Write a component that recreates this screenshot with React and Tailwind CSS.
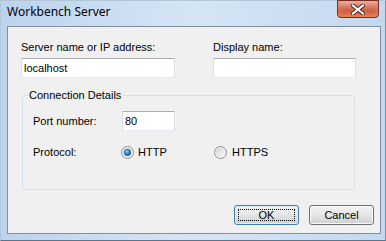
import React from "react";

const Radio = ({ checked }) => (
  <svg width="13" height="13" viewBox="0 0 13 13" className="shrink-0">
    <defs>
      <linearGradient id={checked ? "rg1" : "rg0"} x1="0" y1="0" x2="1" y2="1">
        <stop offset="0" stopColor="#d4d4d4" />
        <stop offset="1" stopColor="#f8f8f8" />
      </linearGradient>
      <radialGradient id="dot" cx="0.4" cy="0.35" r="0.7">
        <stop offset="0" stopColor="#8fd6ff" />
        <stop offset="0.5" stopColor="#2f87cf" />
        <stop offset="1" stopColor="#124a84" />
      </radialGradient>
    </defs>
    <circle cx="6.5" cy="6.5" r="6" fill="#f4f4f4" stroke="#8d8d8d" />
    <circle cx="6.5" cy="6.5" r="4.5" fill={`url(#${checked ? "rg1" : "rg0"})`} />
    {checked && <circle cx="6.5" cy="6.5" r="3.3" fill="url(#dot)" stroke="#1d5a8f" strokeWidth="0.6" />}
  </svg>
);

const TextBox = ({ value, className }) => (
  <div
    className={
      "h-[20px] bg-white border border-t-[#abadb3] border-x-[#dbdfe6] border-b-[#e3e9ef] pl-[2px] flex items-center " +
      (className || "")
    }
  >
    {value}
  </div>
);

const Button = ({ children, isDefault }) => (
  <button
    className={
      "relative w-[65px] h-[20px] rounded-[3px] border flex items-center justify-center bg-gradient-to-b from-[#f2f2f2] via-[#e6e6e6] to-[#cfcfcf] " +
      (isDefault ? "border-[#3c7fb1] shadow-[inset_0_0_0_1px_#dbeefb]" : "border-[#707070] shadow-[inset_0_0_0_1px_#fbfbfb]")
    }
  >
    {isDefault && <span className="absolute inset-[3px] border border-dotted border-black" />}
    <span className="relative">{children}</span>
  </button>
);

export default function App() {
  return (
    <div
      className="w-[386px] h-[241px] flex flex-col pl-[6px] pr-[4px] pb-[6px] bg-gradient-to-r from-[#bcd3ee] via-[#d6e5f5] to-[#c3d8ef] border border-[#b4c6da] border-b-[#5f7389] border-r-[#7d90a6] text-[11px] leading-[13px] text-black"
      style={{ fontFamily: '"Liberation Sans", Arial, sans-serif' }}
    >
      <div className="h-[25px] flex items-start shrink-0">
        <div className="mt-[3px] text-[12px] leading-[16px] text-black" style={{ fontFamily: '"Noto Sans", "Open Sans", sans-serif' }}>
          Workbench Server
        </div>
        <div className="ml-auto mr-[2px] mt-[-1px] w-[42px] h-[18px] rounded-b-[4px] border border-[#7a2b1f] bg-gradient-to-b from-[#eab0a2] via-[#d1684f] to-[#c1432b] flex items-center justify-center shadow-[inset_0_-3px_4px_#ea8d5e]">
          <svg width="14" height="11" viewBox="0 0 14 11">
            <path d="M2 1.5 L12 9.5 M12 1.5 L2 9.5" stroke="#4a1a12" strokeWidth="4" strokeLinecap="square" />
            <path d="M2 1.5 L12 9.5 M12 1.5 L2 9.5" stroke="#ffffff" strokeWidth="2.2" strokeLinecap="square" />
          </svg>
        </div>
      </div>

      <div className="flex-1 bg-[#f0f0f0] border border-[#7f8d9c] flex flex-col pl-[13px] pr-[6px]">
        <div className="flex mt-[14px]">
          <div className="w-[154px] flex flex-col">
            <div className="h-[13px] mb-[4px]">Server name or IP address:</div>
            <TextBox value="localhost" />
          </div>
          <div className="w-[143px] ml-[38px] flex flex-col">
            <div className="h-[13px] mb-[4px]">Display name:</div>
            <TextBox value="" />
          </div>
        </div>

        <fieldset className="mt-[11px] ml-[1px] w-[333px] h-[101px] border border-[#d5dfe5] rounded-[3px] pl-[10px]">
          <legend className="ml-[-5px] px-[1px] leading-[13px]">Connection Details</legend>
          <div className="flex items-center mt-[9px]">
            <div className="w-[89px]">Port number:</div>
            <TextBox value="80" className="w-[53px] h-[19px]" />
          </div>
          <div className="flex items-center h-[13px] mt-[15px]">
            <div className="w-[88px]">Protocol:</div>
            <div className="w-[93px] flex items-center">
              <Radio checked />
              <span className="ml-[4px]">HTTP</span>
            </div>
            <div className="flex items-center">
              <Radio />
              <span className="ml-[5px]">HTTPS</span>
            </div>
          </div>
        </fieldset>

        <div className="flex justify-end gap-[10px] mt-[15px]">
          <Button isDefault>OK</Button>
          <Button>Cancel</Button>
        </div>
      </div>
    </div>
  );
}
